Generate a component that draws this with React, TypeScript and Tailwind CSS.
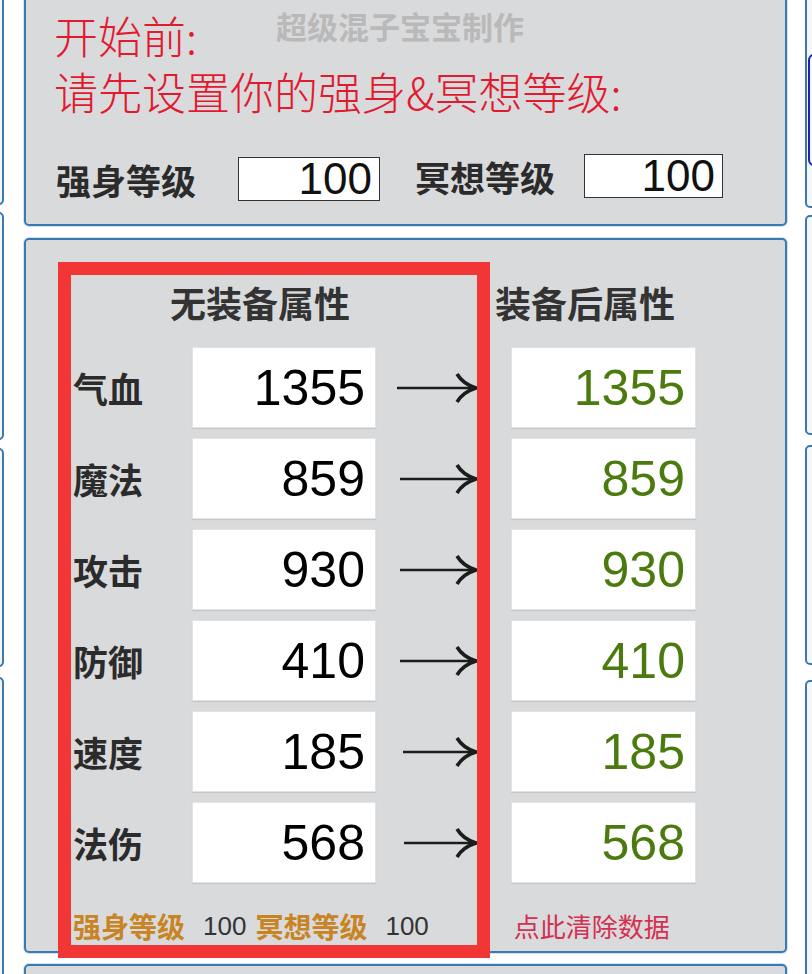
import React from "react";

const CJK = { fontFamily: '"Noto Sans CJK SC", "Noto Sans", sans-serif' };
const NUM = { fontFamily: '"Liberation Sans", Arial, sans-serif' };

const panelCls =
  "shrink-0 bg-[#d9dadb] border-2 border-[#3b79b2] rounded-[5px] shadow-[0_0_0_1px_#cfe3f3]";

const stats: [string, number, number][] = [
  ["气血", 1355, 0],
  ["魔法", 859, 3],
  ["攻击", 930, 3],
  ["防御", 410, 3],
  ["速度", 185, 6],
  ["法伤", 568, 7],
];

function Arrow({ inset }: { inset: number }) {
  return (
    <svg width="81" height="32" viewBox="0 0 81 32">
      <line x1={inset} y1="16" x2="77" y2="16" stroke="#1c1c1c" strokeWidth="2.6" />
      <path
        d="M60 2 Q66 12 79 16 Q66 20 60 30"
        fill="none"
        stroke="#1c1c1c"
        strokeWidth="3.6"
        strokeLinejoin="miter"
      />
    </svg>
  );
}

function Box({ value, green, w }: { value: number; green?: boolean; w: string }) {
  return (
    <div
      className={`${w} h-full flex items-center justify-end pr-[10px] bg-white border border-[#e3e3e3] shadow-[0_1px_1px_rgba(0,0,0,0.08)]`}
    >
      <span
        style={NUM}
        className={`text-[50px] leading-none ${green ? "text-[#4b7b0e]" : "text-black"}`}
      >
        {value}
      </span>
    </div>
  );
}

function SideStrip({ side }: { side: "left" | "right" }) {
  const left = side === "left";
  const segs = left
    ? [
        [0, 215],
        [7, 228],
        [8, 219],
        [10, 320],
      ]
    : [
        [0, 218],
        [7, 220],
        [10, 220],
        [15, 320],
      ];
  return (
    <div className={`${left ? "w-[4px]" : "w-[7px] ml-[18px]"} shrink-0 overflow-hidden`}>
      <div className={`w-[40px] ${left ? "-ml-[36px]" : ""} -mt-[10px] flex flex-col`}>
        {segs.map(([mt, h], i) => (
          <div
            key={i}
            style={{ marginTop: mt, height: h }}
            className={`shrink-0 bg-[#f4f6f8] border-2 border-[#3b79b2] ${
              left ? "rounded-r-[5px]" : "rounded-l-[5px]"
            }`}
          >
            {!left && i === 0 && (
              <div className="mt-[62px] ml-[1px] h-[112px] w-[20px] border-2 border-[#1b24b8] rounded-l-[6px]" />
            )}
          </div>
        ))}
      </div>
    </div>
  );
}

export default function App() {
  return (
    <div className="relative w-[812px] h-[974px] overflow-hidden bg-white flex" style={CJK}>
      <SideStrip side="left" />

      <div className="ml-[20px] w-[763px] shrink-0 flex flex-col">
        {/* Top panel — level settings */}
        <div className={`${panelCls} -mt-[10px] h-[236px] pt-[15px] pl-[28px]`}>
          <div className="flex items-start">
            <span className="text-[44px] leading-[56px] font-light text-[#e2192f]">开始前:</span>
            <span className="ml-[79px] -mt-[1px] text-[31px] leading-[40px] font-bold text-[#b9b9b9]">
              超级混子宝宝制作
            </span>
          </div>
          <div className="text-[44px] leading-[56px] font-light text-[#e2192f]">
            请先设置你的强身&冥想等级:
          </div>

          <div className="mt-[35px] flex items-center">
            <span className="ml-[2px] text-[35px] leading-none font-bold text-[#2b2b2b]">强身等级</span>
            <div className="ml-[42px] w-[142px] h-[44px] flex items-center justify-end pr-[7px] bg-white border border-[#333]">
              <span style={NUM} className="text-[44px] leading-none text-[#111]">
                100
              </span>
            </div>
            <div className="ml-[35px] mb-[6px] flex items-center">
              <span className="text-[35px] leading-none font-bold text-[#2b2b2b]">冥想等级</span>
              <div className="ml-[29px] w-[139px] h-[44px] flex items-center justify-end pr-[7px] bg-white border border-[#333]">
                <span style={NUM} className="text-[44px] leading-none text-[#111]">
                  100
                </span>
              </div>
            </div>
          </div>
        </div>

        {/* Stats panel */}
        <div className={`${panelCls} mt-[12px] h-[715px] pt-[42px] pl-[47px]`}>
          <div className="flex text-[36px] leading-[40px] font-bold text-[#333]">
            <span className="ml-[97px]">无装备属性</span>
            <span className="ml-[145px]">装备后属性</span>
          </div>

          <div className="mt-[25px] flex flex-col gap-[10px]">
            {stats.map(([label, v, inset]) => (
              <div key={label} className="flex items-center h-[81px]">
                <span className="w-[119px] text-[35px] leading-none font-bold text-[#2b2b2b]">
                  {label}
                </span>
                <Box value={v} w="w-[184px]" />
                <div className="ml-[21px] w-[81px] flex items-center">
                  <Arrow inset={inset} />
                </div>
                <div className="ml-[33px] h-full flex">
                  <Box value={v} green w="w-[185px]" />
                </div>
              </div>
            ))}
          </div>

          <div className="mt-[25px] flex items-center leading-[36px]">
            <span className="text-[28px] font-bold text-[#c88424]">强身等级</span>
            <span style={NUM} className="ml-[18px] text-[26px] text-[#333]">
              100
            </span>
            <span className="ml-[9px] text-[28px] font-bold text-[#c88424]">冥想等级</span>
            <span style={NUM} className="ml-[18px] text-[26px] text-[#333]">
              100
            </span>
            <span className="ml-[85px] text-[26px] text-[#d33052]">点此清除数据</span>
          </div>
        </div>

        {/* Next panel, cut off */}
        <div className={`${panelCls} mt-[11px] h-[40px]`} />
      </div>

      <SideStrip side="right" />

      {/* Red highlight drawn over the base stats */}
      <div className="absolute left-[58px] top-[262px] w-[432px] h-[696px] border-[13px] border-[#f23636] pointer-events-none" />
    </div>
  );
}
